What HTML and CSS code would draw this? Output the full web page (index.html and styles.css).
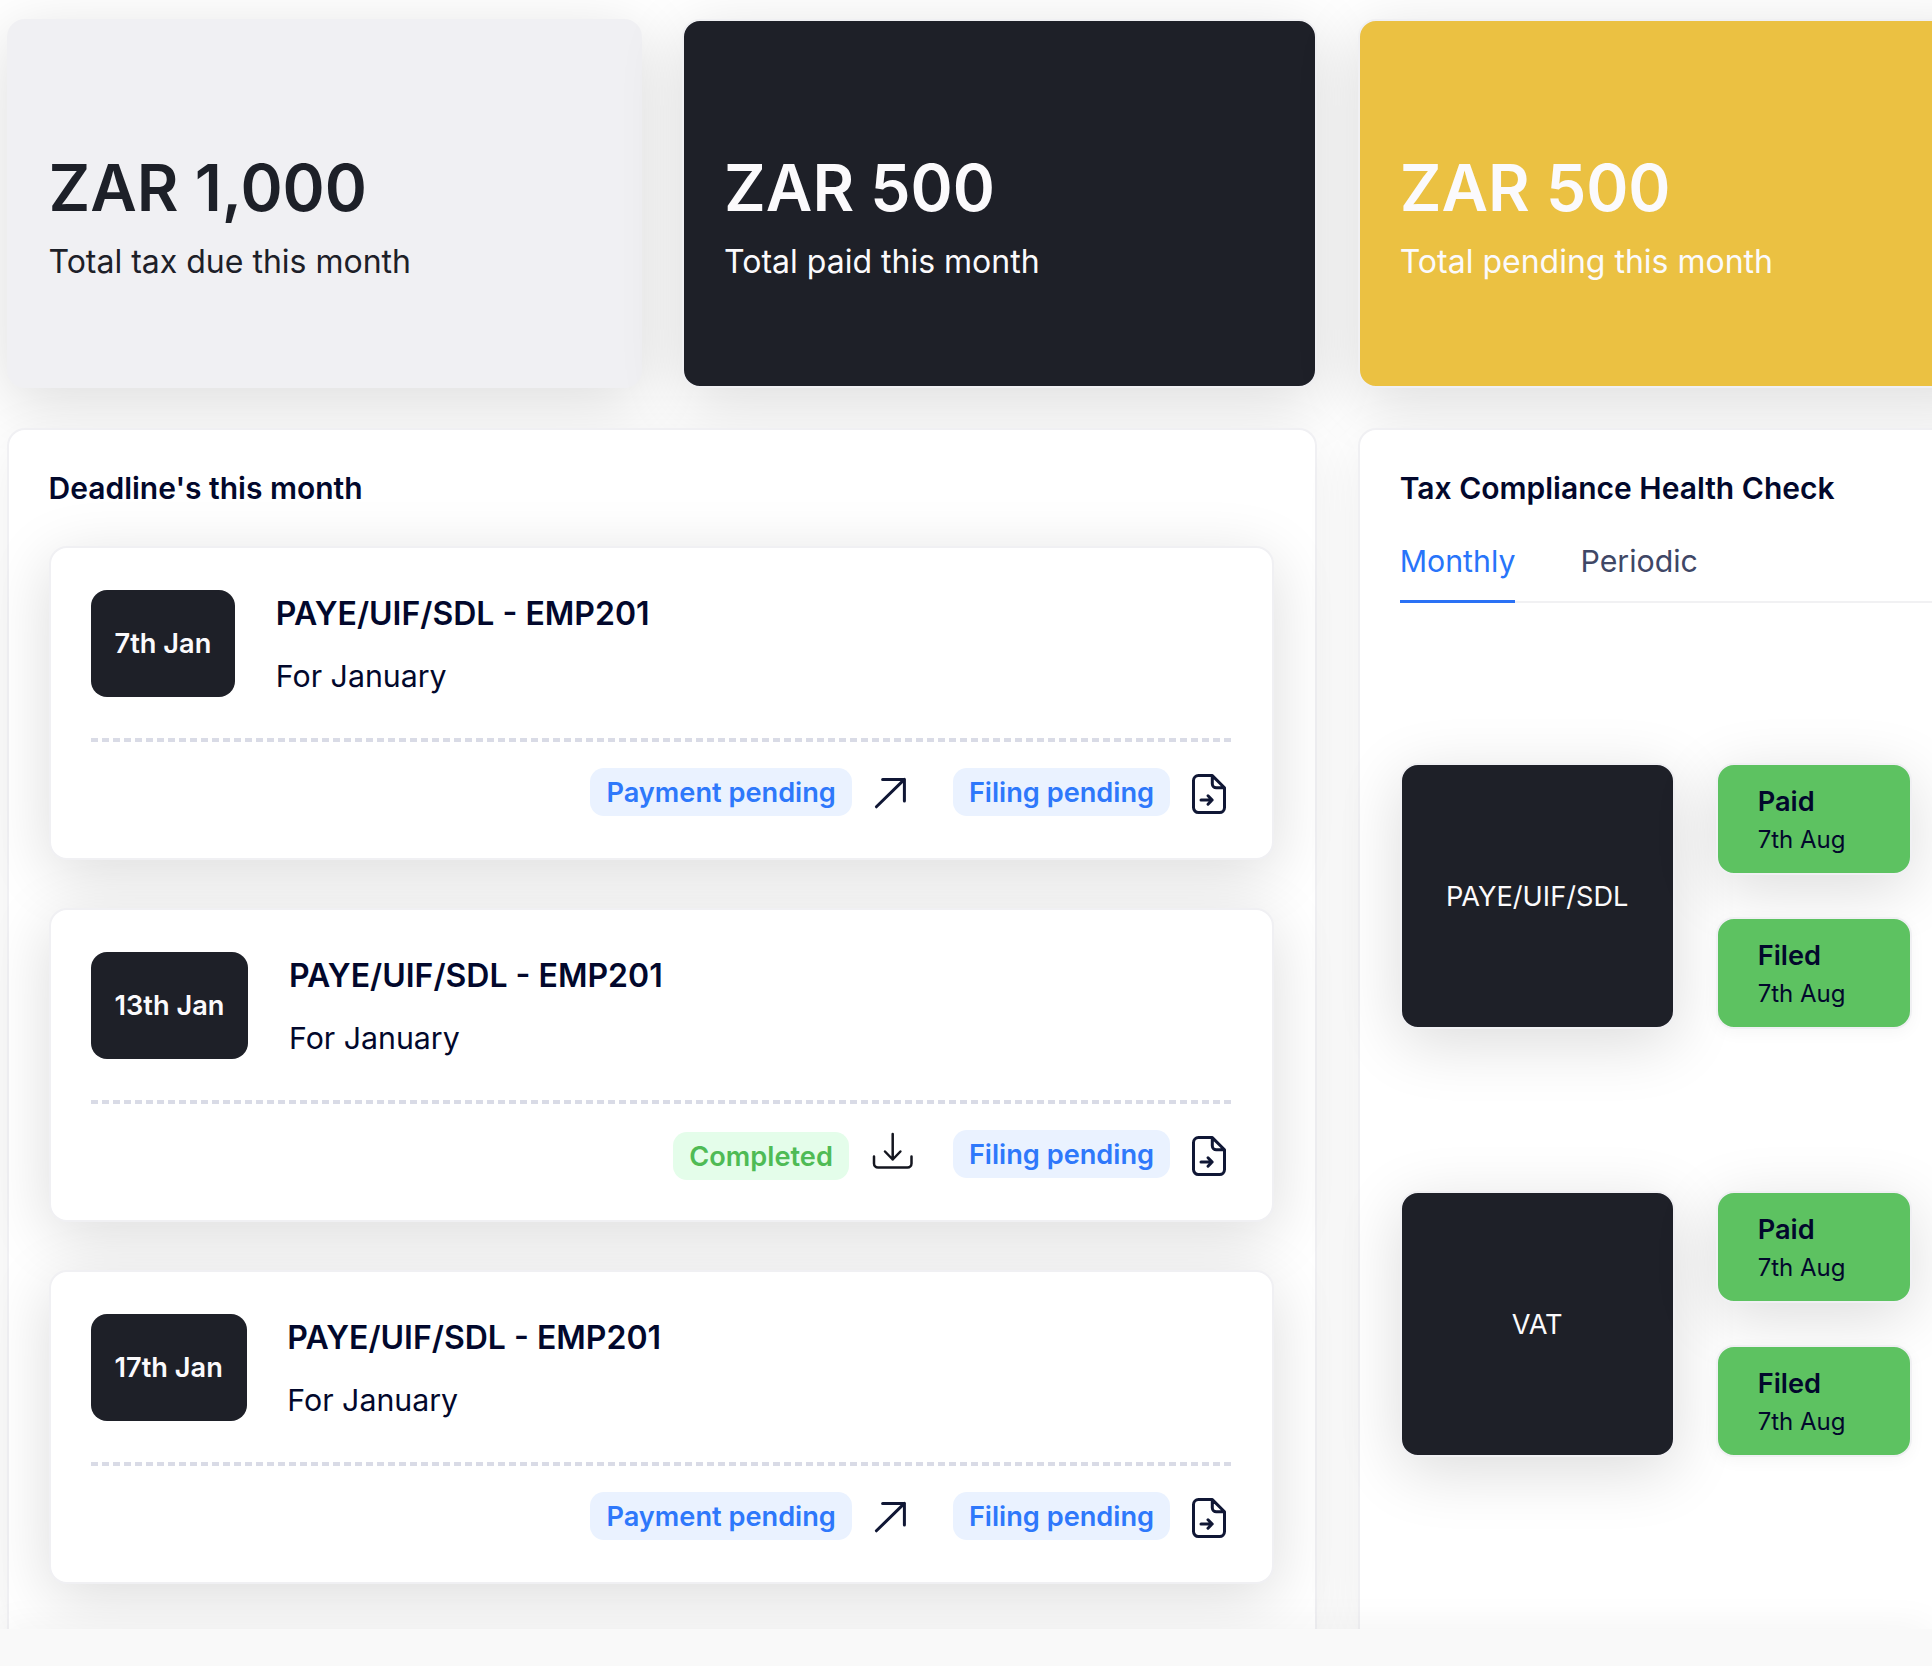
FILE: index.html
```html
<!DOCTYPE html>
<html lang="en">

<head>
    <meta charset="UTF-8">
    <meta name="viewport" content="width=device-width, initial-scale=1.0">
    <title>Tax dashboard</title>
    <link rel="stylesheet" href="styles.css">
</head>

<body>
    <!-- shared icons -->
    <svg class="sprite" width="0" height="0">
        <symbol id="icon-arrow" viewBox="0 0 42 48">
            <path d="M6.4 38.8L34.4 11.4M12.6 11.4H34.4V33" />
        </symbol>
        <symbol id="icon-file" viewBox="0 0 44 48">
            <path d="M24.3 7.6H10.5a5 5 0 0 0-5 5v27a5 5 0 0 0 5 5h21a5 5 0 0 0 5-5V19.8L24.3 7.6v8.2a4 4 0 0 0 4 4h8.2" />
            <path d="M13 32h11M20 27.8l4.2 4.2-4.2 4.2" />
        </symbol>
        <symbol id="icon-download" viewBox="0 0 46 48">
            <path d="M23.7 4v25.5M16 21.5l7.7 8 7.7-8M5 26.5v7a4 4 0 0 0 4 4h29.5a4 4 0 0 0 4-4v-7" />
        </symbol>
    </svg>

    <main class="dashboard">
        <section class="stat stat-light">
            <div class="amount">ZAR 1,000</div>
            <div class="label">Total tax due this month</div>
        </section>
        <section class="stat stat-dark">
            <div class="amount">ZAR 500</div>
            <div class="label">Total paid this month</div>
        </section>
        <section class="stat stat-yellow">
            <div class="amount">ZAR 500</div>
            <div class="label">Total pending this month</div>
        </section>

        <section class="panel deadlines">
            <h2>Deadline's this month</h2>

            <article class="deadline">
                <div class="deadline-top">
                    <div class="date">7th Jan</div>
                    <div>
                        <h3>PAYE/UIF/SDL - EMP201</h3>
                        <p>For January</p>
                    </div>
                </div>
                <div class="divider"></div>
                <div class="actions">
                    <span class="badge">Payment pending</span>
                    <svg class="icon icon-arrow"><use href="#icon-arrow" /></svg>
                    <span class="badge">Filing pending</span>
                    <svg class="icon icon-file"><use href="#icon-file" /></svg>
                </div>
            </article>

            <article class="deadline">
                <div class="deadline-top">
                    <div class="date">13th Jan</div>
                    <div>
                        <h3>PAYE/UIF/SDL - EMP201</h3>
                        <p>For January</p>
                    </div>
                </div>
                <div class="divider"></div>
                <div class="actions">
                    <span class="badge badge-done">Completed</span>
                    <svg class="icon icon-download"><use href="#icon-download" /></svg>
                    <span class="badge">Filing pending</span>
                    <svg class="icon icon-file"><use href="#icon-file" /></svg>
                </div>
            </article>

            <article class="deadline">
                <div class="deadline-top">
                    <div class="date">17th Jan</div>
                    <div>
                        <h3>PAYE/UIF/SDL - EMP201</h3>
                        <p>For January</p>
                    </div>
                </div>
                <div class="divider"></div>
                <div class="actions">
                    <span class="badge">Payment pending</span>
                    <svg class="icon icon-arrow"><use href="#icon-arrow" /></svg>
                    <span class="badge">Filing pending</span>
                    <svg class="icon icon-file"><use href="#icon-file" /></svg>
                </div>
            </article>
        </section>

        <section class="panel health">
            <h2>Tax Compliance Health Check</h2>
            <nav class="tabs">
                <a class="tab active">Monthly</a>
                <a class="tab">Periodic</a>
            </nav>

            <div class="check">
                <div class="tax">PAYE/UIF/SDL</div>
                <div class="states">
                    <div class="state"><b>Paid</b><span>7th Aug</span></div>
                    <div class="state state-filed"><b>Filed</b><span>7th Aug</span></div>
                </div>
            </div>

            <div class="check">
                <div class="tax">VAT</div>
                <div class="states">
                    <div class="state"><b>Paid</b><span>7th Aug</span></div>
                    <div class="state state-filed"><b>Filed</b><span>7th Aug</span></div>
                </div>
            </div>
        </section>
    </main>
    <footer class="footer"></footer>
</body>

</html>
```
FILE: styles.css
```css
* {
    box-sizing: border-box;
}

body {
    margin: 0;
    height: 100vh;
    overflow: hidden;
    background-color: #fff;
    color: #02082c;
    font-family: Inter, "Liberation Sans", sans-serif;
    font-size: 27.2px;
}

h2,
h3,
p {
    margin: 0;
}

.sprite {
    display: block;
}

.dashboard {
    display: grid;
    grid-template-columns: repeat(3, 635px);
    grid-template-rows: 369px 1201px;
    gap: 40px 40.6px;
    height: 1629px;
    padding: 19px 0 0 6.5px;
    overflow: hidden;
}

/* top row */
.stat {
    padding: 127px 40px 0;
    border: 2px solid #f0f0f3;
    border-radius: 18px;
    box-shadow: 0 14px 64px rgba(0, 0, 0, 0.14);
}

.amount {
    font-size: 64px;
    font-weight: 600;
    line-height: 80px;
}

.label {
    margin-top: 14px;
    font-size: 32px;
    line-height: 40px;
}

.stat-light {
    background-color: #f0f0f3;
    color: #1d2028;
}

.stat-dark {
    background-color: #1e2028;
    color: #fbfafc;
}

.stat-yellow {
    background-color: #ebc142;
    color: #fbfafc;
}

/* panels */
.panel {
    padding: 36px 41px 0 40px;
    background-color: #fff;
    border: 2px solid #f0f0f3;
    border-bottom: none;
    border-radius: 18px 18px 0 0;
    box-shadow: 0 14px 60px rgba(0, 0, 0, 0.07);
}

.panel h2 {
    font-size: 30px;
    font-weight: 600;
    line-height: 45px;
}

.deadlines {
    grid-column: span 2;
}

.deadlines h2 {
    margin-bottom: 35px;
}

.deadline {
    height: 314px;
    margin-bottom: 48.2px;
    padding: 42px 40px 0;
    background-color: #fff;
    border: 2px solid #f0f0f3;
    border-radius: 18px;
    box-shadow: 0 14px 64px rgba(0, 0, 0, 0.14);
}

.deadline-top {
    display: flex;
    gap: 40.5px;
    height: 107px;
}

.date {
    display: flex;
    align-items: center;
    padding: 0 24px;
    background-color: #1e2028;
    color: #fbfafc;
    border-radius: 16px;
    font-weight: 600;
}

.deadline h3 {
    font-size: 32px;
    font-weight: 600;
    line-height: 48px;
}

.deadline p {
    margin-top: 17px;
    font-size: 30.3px;
    line-height: 42px;
}

.divider {
    height: 4px;
    margin: 41px 0 26px;
    background: repeating-linear-gradient(90deg, #d9dbe6 0 7px, transparent 7px 11px);
}

.actions {
    display: flex;
    justify-content: flex-end;
}

.badge {
    height: 48px;
    padding: 0 16px;
    background-color: #eaf2ff;
    color: #2e78fb;
    border-radius: 14px;
    font-weight: 600;
    line-height: 49px;
}

.badge-done {
    margin-top: 2px;
    margin-bottom: -2px;
    background-color: #e4fdea;
    color: #4fbb55;
}

.icon {
    height: 48px;
    fill: none;
    stroke: #101735;
    stroke-width: 3;
    stroke-linecap: round;
    stroke-linejoin: round;
}

.icon-arrow {
    width: 42px;
    margin: 0 41px 0 18px;
}

.icon-file {
    width: 44px;
    margin-left: 18px;
}

.icon-download {
    width: 46px;
    margin: 0 38px 0 20px;
    stroke: #14161f;
    stroke-width: 2.5;
}

/* health check */
.tabs {
    display: flex;
    gap: 65px;
    height: 92px;
    margin-bottom: 160px;
    border-bottom: 2px solid #f1f1f3;
}

.tab {
    height: 92px;
    padding-top: 28px;
    color: #3f4766;
    font-size: 30.3px;
    line-height: 44px;
}

.tab.active {
    color: #2874fa;
    border-bottom: 3px solid #2a71f5;
}

.check {
    display: flex;
    gap: 41px;
    height: 266px;
    margin-bottom: 162px;
}

.tax {
    display: flex;
    align-items: center;
    justify-content: center;
    width: 275px;
    background-color: #1e2028;
    color: #fbfafc;
    border: 2px solid #f0f0f3;
    border-radius: 18px;
    box-shadow: 0 14px 64px rgba(0, 0, 0, 0.14);
}

.states {
    display: flex;
    flex-direction: column;
    justify-content: space-between;
    width: 196px;
}

.state {
    height: 112px;
    padding: 17px 40px;
    background-color: #5dc261;
    border: 2px solid #f0f0f3;
    border-radius: 18px;
    box-shadow: 0 14px 64px rgba(0, 0, 0, 0.14);
}

.state-filed {
    box-shadow: 0 4px 16px rgba(0, 0, 0, 0.04);
}

.state b {
    display: block;
    font-weight: 600;
    line-height: 40px;
}

.state span {
    display: block;
    font-size: 24px;
    line-height: 35px;
}

.footer {
    position: relative;
    height: 37px;
    background-color: #f9f9f9;
    box-shadow: 0 0 40px rgba(0, 0, 0, 0.06);
}
```
